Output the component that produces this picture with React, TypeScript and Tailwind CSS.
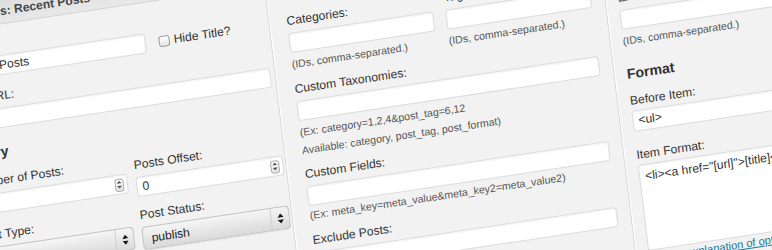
import React from "react";

/** Widget options form, drawn flat and then tilted like the banner photo. */

function Label({ children, className = "" }: { children: React.ReactNode; className?: string }) {
  return <div className={`h-4 whitespace-nowrap text-[12px] leading-4 text-[#333] ${className}`}>{children}</div>;
}

function Help({ children, className = "mt-[2px]" }: { children: React.ReactNode; className?: string }) {
  return <div className={`whitespace-nowrap text-[10.5px] leading-[18px] text-[#555] ${className}`}>{children}</div>;
}

function TextBox({ value = "", className = "" }: { value?: string; className?: string }) {
  return (
    <div
      className={`h-5 overflow-hidden whitespace-nowrap rounded-[3px] border border-[#dcdcdc] bg-white px-[5px] text-[12px] leading-[18px] text-[#333] shadow-[inset_0_1px_2px_rgba(0,0,0,0.06)] ${className}`}
    >
      {value}
    </div>
  );
}

function Spinner() {
  return (
    <span className="flex h-[13px] w-[9px] flex-col items-center justify-center gap-[2px] rounded-[3px] border border-[#a9a9a9] bg-gradient-to-b from-white to-[#e4e4e4]">
      <svg width="5" height="3" viewBox="0 0 5 3">
        <path d="M2.5 0L5 3H0z" fill="#555" />
      </svg>
      <svg width="5" height="3" viewBox="0 0 5 3">
        <path d="M0 0h5L2.5 3z" fill="#555" />
      </svg>
    </span>
  );
}

function NumberBox({ value = "" }: { value?: string }) {
  return (
    <div className="flex h-5 items-center justify-between rounded-[3px] border border-[#dcdcdc] bg-white pl-[5px] pr-[3px] text-[12px] text-[#333] shadow-[inset_0_1px_2px_rgba(0,0,0,0.06)]">
      <span>{value}</span>
      <Spinner />
    </div>
  );
}

function Select({ value }: { value: string }) {
  return (
    <div className="flex h-[23px] items-center rounded-[4px] border border-[#c4c4c4] bg-gradient-to-b from-[#f5f5f5] to-[#dadada] text-[12px] text-[#222] shadow-[0_1px_1px_rgba(0,0,0,0.08)]">
      <span className="flex-1 pl-[8px]">{value}</span>
      <span className="flex h-full w-[18px] flex-col items-center justify-center gap-[2px] border-l border-[#cfcfcf]">
        <svg width="6" height="4" viewBox="0 0 6 4">
          <path d="M3 0L6 4H0z" fill="#111" />
        </svg>
        <svg width="6" height="4" viewBox="0 0 6 4">
          <path d="M0 0h6L3 4z" fill="#111" />
        </svg>
      </span>
    </div>
  );
}

export default function App() {
  return (
    <div className="h-[250px] w-[772px] overflow-hidden bg-[#f1f1f1] font-['Liberation_Sans',Arial,sans-serif]">
      <div className="-ml-[60px] -mt-[20px] w-[900px] origin-[60px_20px] bg-[#f2f2f2] [transform:matrix(1,-0.15,0.12,1,0,0)]">
        {/* Header */}
        <div className="h-[44px] border-b border-[#d2d2d2] bg-gradient-to-b from-[#d6d6d6] to-[#e8e8e8] pl-[18px] pt-[23px] text-[12px] font-bold leading-4 text-[#464646]">
          Settings: Recent Posts
        </div>

        <div className="flex h-[356px]">
          {/* Column 1 */}
          <div className="w-[322px] shrink-0 border-r border-[#d6d6d6] pl-[10px] pr-[4px] pt-[10px]">
            <Label>Title:</Label>
            <div className="mt-1 flex items-center">
              <TextBox value="Recent Posts" className="-ml-[6px] w-[194px]" />
              <span className="ml-[13px] h-[11px] w-[11px] rounded-[3px] border border-[#9a9a9a] bg-gradient-to-b from-white to-[#e6e6e6]" />
              <span className="ml-[4px] text-[12px] leading-4 text-[#333]">Hide Title?</span>
            </div>

            <Label className="mt-[12px]">Title URL:</Label>
            <TextBox className="mt-1" />

            <div className="mt-[14px] h-[18px] text-[14px] font-bold leading-[18px] text-[#333]">Query</div>

            <div className="mt-[11px] flex gap-x-2">
              <div className="flex w-[154px] shrink-0 flex-col">
                <Label>Number of Posts:</Label>
                <div className="mt-1">
                  <NumberBox value="5" />
                </div>
                <Label className="mt-[13px]">Post Type:</Label>
                <div className="mt-1">
                  <Select value="post" />
                </div>
              </div>
              <div className="flex w-[147px] shrink-0 flex-col pt-[5px]">
                <Label>Posts Offset:</Label>
                <div className="mt-1">
                  <NumberBox value="0" />
                </div>
                <Label className="mt-[10px]">Post Status:</Label>
                <div className="mt-1">
                  <Select value="publish" />
                </div>
              </div>
            </div>
          </div>

          {/* Column 2 */}
          <div className="w-[333px] shrink-0 border-l border-r border-l-white border-r-[#d6d6d6] pl-[16px] pr-[13px] pt-[31px]">
            <div className="grid grid-cols-2 gap-x-3">
              <div>
                <Label>Categories:</Label>
                <TextBox className="mt-1" />
                <Help>(IDs, comma-separated.)</Help>
              </div>
              <div>
                <Label>Tags:</Label>
                <TextBox className="mt-1" />
                <Help>(IDs, comma-separated.)</Help>
              </div>
            </div>

            <Label className="mt-2">Custom Taxonomies:</Label>
            <TextBox className="mt-1" />
            <Help>
              (Ex: category=1,2,4&amp;post_tag=6,12
              <br />
              Available: category, post_tag, post_format)
            </Help>

            <Label className="mt-[7px]">Custom Fields:</Label>
            <TextBox className="mt-1" />
            <Help className="mt-0">(Ex: meta_key=meta_value&amp;meta_key2=meta_value2)</Help>

            <Label className="mt-2">Exclude Posts:</Label>
            <TextBox className="mt-1" />
            <Help>(IDs, comma-separated.)</Help>
          </div>

          {/* Column 3 */}
          <div className="flex-1 border-l border-white pl-[11px] pt-[57px]">
            <Label>Exclude Categories:</Label>
            <TextBox className="mt-1" />
            <Help>(IDs, comma-separated.)</Help>

            <div className="mt-[15px] h-[18px] text-[14px] font-bold leading-[18px] text-[#333]">Format</div>

            <Label className="mt-[10px]">Before Item:</Label>
            <TextBox value="<ul>" className="mt-[2px] h-[21px]" />

            <Label className="mt-[15px]">Item Format:</Label>
            <div className="mt-[2px] h-[86px] overflow-hidden whitespace-nowrap rounded-[3px] border border-[#dcdcdc] bg-white px-[5px] py-[3px] text-[12px] leading-4 text-[#333] shadow-[inset_0_1px_2px_rgba(0,0,0,0.06)]">
              {'<li><a href="[url]">[title]</a></li>'}
            </div>
            <div className="ml-[38px] -mt-[2px] text-[11px] leading-[18px] text-[#21759b] underline">
              explanation of options
            </div>
          </div>
        </div>
      </div>
    </div>
  );
}
